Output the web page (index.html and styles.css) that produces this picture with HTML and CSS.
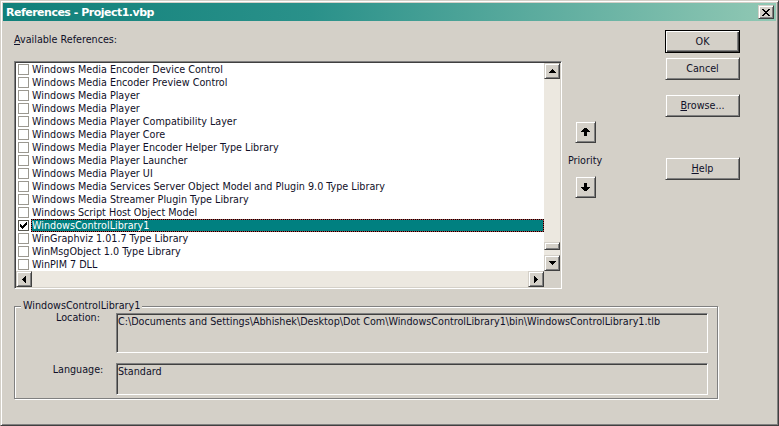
FILE: index.html
```html
<!DOCTYPE html>
<html>
<head>
<meta charset="utf-8">
<link rel="stylesheet" href="styles.css">
</head>
<body>
<div class="window">
  <div class="titlebar">
    <span class="title">References - Project1.vbp</span>
    <div class="close bevel">
      <svg width="8" height="7" viewBox="0 0 8 7" shape-rendering="crispEdges"><path d="M0 0h2v1H0zM6 0h2v1H6zM1 1h2v1H1zM5 1h2v1H5zM2 2h4v1H2zM3 3h2v1H3zM2 4h4v1H2zM1 5h2v1H1zM5 5h2v1H5zM0 6h2v1H0zM6 6h2v1H6z" fill="#000"/></svg>
    </div>
  </div>
  <div class="content">
    <div class="top">
      <div class="left">
        <div class="avail"><u>A</u>vailable References:</div>
        <div class="listbox">
          <div class="listmain">
            <div class="rows">
              <div class="row"><span class="cb"></span><span class="txt">Windows Media Encoder Device Control</span></div>
              <div class="row"><span class="cb"></span><span class="txt">Windows Media Encoder Preview Control</span></div>
              <div class="row"><span class="cb"></span><span class="txt">Windows Media Player</span></div>
              <div class="row"><span class="cb"></span><span class="txt">Windows Media Player</span></div>
              <div class="row"><span class="cb"></span><span class="txt">Windows Media Player Compatibility Layer</span></div>
              <div class="row"><span class="cb"></span><span class="txt">Windows Media Player Core</span></div>
              <div class="row"><span class="cb"></span><span class="txt">Windows Media Player Encoder Helper Type Library</span></div>
              <div class="row"><span class="cb"></span><span class="txt">Windows Media Player Launcher</span></div>
              <div class="row"><span class="cb"></span><span class="txt">Windows Media Player UI</span></div>
              <div class="row"><span class="cb"></span><span class="txt">Windows Media Services Server Object Model and Plugin 9.0 Type Library</span></div>
              <div class="row"><span class="cb"></span><span class="txt">Windows Media Streamer Plugin Type Library</span></div>
              <div class="row"><span class="cb"></span><span class="txt">Windows Script Host Object Model</span></div>
              <div class="row"><span class="cb checked"><svg width="7" height="7" viewBox="0 0 7 7" shape-rendering="crispEdges"><path d="M6 0h1v1H6zM5 1h2v1H5zM0 2h1v1H0zM4 2h3v1H4zM0 3h2v1H0zM3 3h3v1H3zM0 4h5v1H0zM1 5h3v1H1zM2 6h1v1H2z" fill="#000"/></svg></span><span class="txt sel">WindowsControlLibrary1</span></div>
              <div class="row"><span class="cb"></span><span class="txt">WinGraphviz 1.01.7 Type Library</span></div>
              <div class="row"><span class="cb"></span><span class="txt">WinMsgObject 1.0 Type Library</span></div>
              <div class="row"><span class="cb"></span><span class="txt">WinPIM 7 DLL</span></div>
            </div>
            <div class="vscroll">
              <div class="sbtn bevel"><svg width="7" height="4" viewBox="0 0 7 4" shape-rendering="crispEdges"><path d="M3 0h1v1H3zM2 1h3v1H2zM1 2h5v1H1zM0 3h7v1H0z" fill="#000"/></svg></div>
              <div class="vtrack"><div class="thumb bevel"></div></div>
              <div class="sbtn bevel"><svg width="7" height="4" viewBox="0 0 7 4" shape-rendering="crispEdges"><path d="M0 0h7v1H0zM1 1h5v1H1zM2 2h3v1H2zM3 3h1v1H3z" fill="#000"/></svg></div>
            </div>
          </div>
          <div class="hscroll">
            <div class="sbtn bevel"><svg width="4" height="7" viewBox="0 0 4 7" shape-rendering="crispEdges"><path d="M0 3h1v1H0zM1 2h1v3H1zM2 1h1v5H2zM3 0h1v7H3z" fill="#000"/></svg></div>
            <div class="htrack"></div>
            <div class="sbtn bevel"><svg width="4" height="7" viewBox="0 0 4 7" shape-rendering="crispEdges"><path d="M0 0h1v7H0zM1 1h1v5H1zM2 2h1v3H2zM3 3h1v1H3z" fill="#000"/></svg></div>
            <div class="corner"></div>
          </div>
        </div>
      </div>
      <div class="prio">
        <div class="pbtn bevel"><svg width="9" height="8" viewBox="0 0 9 8" shape-rendering="crispEdges"><path d="M3 0h3v1H3zM2 1h5v1H2zM1 2h7v1H1zM0 3h9v1H0zM3 4h3v4H3z" fill="#000"/></svg></div>
        <div class="plabel">Priority</div>
        <div class="pbtn bevel"><svg width="9" height="8" viewBox="0 0 9 8" shape-rendering="crispEdges"><path d="M3 0h3v4H3zM0 4h9v1H0zM1 5h7v1H1zM2 6h5v1H2zM3 7h3v1H3z" fill="#000"/></svg></div>
      </div>
      <div class="buttons">
        <div class="btn default">OK</div>
        <div class="btn bevel b-cancel">Cancel</div>
        <div class="btn bevel b-browse"><u>B</u>rowse...</div>
        <div class="btn bevel b-help"><u>H</u>elp</div>
      </div>
    </div>
    <fieldset class="group">
      <legend>WindowsControlLibrary1</legend>
      <div class="frow">
        <div class="flabel loc">Location:</div>
        <div class="fbox tall">C:\Documents and Settings\Abhishek\Desktop\Dot Com\WindowsControlLibrary1\bin\WindowsControlLibrary1.tlb</div>
      </div>
      <div class="frow lang-row">
        <div class="flabel">Language:</div>
        <div class="fbox short">Standard</div>
      </div>
    </fieldset>
  </div>
</div>
</body>
</html>
```

FILE: styles.css
```css
* { box-sizing: border-box; }
html, body { margin: 0; padding: 0; }
body {
  width: 779px;
  height: 426px;
  overflow: hidden;
  background: #d4d0c8;
  font-family: "DejaVu Sans Condensed", "DejaVu Sans", sans-serif;
  font-size: 10.7px;
  color: #101028;
}
.window {
  width: 779px;
  height: 426px;
  background: #d4d0c8;
  border: 1px solid;
  border-color: #d4d0c8 #404040 #404040 #d4d0c8;
  box-shadow: inset 1px 1px 0 #fff, inset -1px -1px 0 #808080;
  padding: 2px;
  display: flex;
  flex-direction: column;
}
.bevel {
  background: #d4d0c8;
  border: 1px solid;
  border-color: #d4d0c8 #404040 #404040 #d4d0c8;
  box-shadow: inset 1px 1px 0 #fff, inset -1px -1px 0 #808080;
}
.titlebar {
  height: 18px;
  flex: none;
  background: linear-gradient(to right, #10807a 0%, #2a918a 40%, #91c8b4 100%);
  display: flex;
  align-items: center;
  padding: 0 2px 0 3px;
}
.title {
  flex: 1;
  color: #fff;
  font-family: "DejaVu Sans", sans-serif;
  font-weight: bold;
  font-size: 11px;
  letter-spacing: -0.5px;
  line-height: 13px;
}
.close {
  width: 16px;
  height: 14px;
  display: flex;
  align-items: center;
  justify-content: center;
}
.content {
  flex: 1;
  padding: 9px 36px 0 11px;
}
.top {
  display: flex;
  align-items: flex-start;
}
.left {
  width: 548px;
  flex: none;
  padding-top: 3px;
}
.avail {
  height: 13px;
  line-height: 13px;
  margin-bottom: 15px;
}
.listbox {
  width: 548px;
  height: 228px;
  background: #fff;
  border: 1px solid;
  border-color: #808080 #fff #fff #808080;
  box-shadow: inset 1px 1px 0 #404040, inset -1px -1px 0 #d4d0c8;
  padding: 1px;
  display: flex;
  flex-direction: column;
}
.listmain {
  display: flex;
  height: 208px;
}
.rows {
  width: 528px;
  height: 208px;
  overflow: hidden;
}
.row {
  height: 13px;
  display: flex;
  align-items: center;
  padding-left: 2px;
  white-space: nowrap;
}
.cb {
  width: 11px;
  height: 11px;
  flex: none;
  border: 1px solid #9b9890;
  background: #fff;
  margin-right: 2px;
  display: flex;
  align-items: center;
  justify-content: center;
}
.cb.checked { border-color: #5a5850; }
.txt {
  line-height: 11px;
  border: 1px solid transparent;
  padding: 0;
}
.txt.sel {
  flex: 1;
  color: #fff;
  border: 1px dotted #000;
  background: linear-gradient(#008080, #008080) padding-box, #b04848 border-box;
}
.vscroll {
  width: 16px;
  flex: none;
  display: flex;
  flex-direction: column;
  background: #ece8e0;
}
.sbtn {
  width: 16px;
  height: 16px;
  flex: none;
  display: flex;
  align-items: center;
  justify-content: center;
}
.vtrack {
  flex: 1;
  display: flex;
  flex-direction: column;
  justify-content: flex-end;
  padding-bottom: 5px;
}
.thumb {
  height: 8px;
  width: 16px;
}
.hscroll {
  height: 16px;
  display: flex;
}
.htrack {
  flex: 1;
  background: #ece8e0;
}
.corner {
  width: 16px;
  background: #d4d0c8;
}
.prio {
  width: 40px;
  flex: none;
  margin-left: 3px;
  display: flex;
  flex-direction: column;
  align-items: center;
  padding-top: 91px;
}
.pbtn {
  width: 21px;
  height: 22px;
  display: flex;
  align-items: center;
  justify-content: center;
}
.plabel {
  line-height: 13px;
  margin: 11px 0 9px;
}
.buttons {
  margin-left: auto;
  width: 75px;
  flex: none;
  display: flex;
  flex-direction: column;
}
.btn {
  height: 23px;
  display: flex;
  align-items: center;
  justify-content: center;
  line-height: 13px;
}
.btn.default {
  background: #d4d0c8;
  border: 1px solid #000;
  box-shadow: inset 1px 1px 0 #fff, inset -1px -1px 0 #404040, inset -2px -2px 0 #808080;
}
.b-cancel { margin-top: 4px; }
.b-browse { margin-top: 14px; }
.b-help { margin-top: 40px; }
.group {
  margin: 11px 0 0 0;
  min-width: 0;
  width: 704px;
  border: 1px solid #808080;
  box-shadow: inset 1px 1px 0 #fff, 1px 1px 0 #fff;
  padding: 1px 9px 3px 0;
}
.group legend {
  margin-left: 6px;
  padding: 0 2px;
  line-height: 12px;
  background: #d4d0c8;
}
.frow {
  display: flex;
  align-items: flex-start;
}
.lang-row { margin-top: 10px; }
.flabel {
  width: 101px;
  flex: none;
  padding-left: 25px;
  text-align: center;
  line-height: 13px;
}
.flabel.loc { margin-top: -2px; }
.fbox {
  width: 592px;
  flex: none;
  border: 1px solid;
  border-color: #808080 #fff #fff #808080;
  box-shadow: inset 1px 1px 0 #404040, inset -1px -1px 0 #d4d0c8;
  padding: 1px;
  line-height: 13px;
  white-space: nowrap;
  overflow: hidden;
}
.fbox.tall { height: 40px; }
.fbox.short { height: 32px; }
```
